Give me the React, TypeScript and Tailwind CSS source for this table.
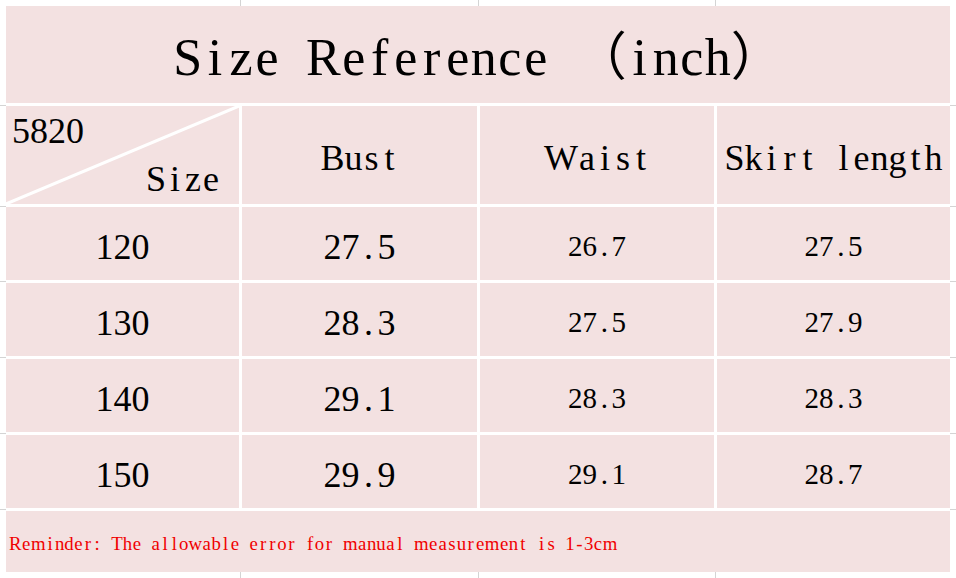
import React from "react";

const Mono = ({ text }: { text: string }) => (
  <>
    {Array.from(text).map((c, i) => (
      <span key={i} className="inline-block min-w-[0.5em] text-center">
        {c === " " ? "\u00a0" : c}
      </span>
    ))}
  </>
);

const rows = [
  ["120", "27.5", "26.7", "27.5"],
  ["130", "28.3", "27.5", "27.9"],
  ["140", "29.1", "28.3", "28.3"],
  ["150", "29.9", "29.1", "28.7"],
];

const font = "font-['Liberation_Serif','Noto_Sans_CJK_SC',serif]";

export default function App() {
  const cell =
    "bg-[#f3e1e1] flex items-center justify-center whitespace-nowrap text-black pt-[6px]";
  return (
    <div className={`relative w-[956px] h-[578px] bg-white p-[6px] ${font}`}>
      <svg
        className="absolute inset-0"
        width="956"
        height="578"
        viewBox="0 0 956 578"
      >
        {[240.5, 478.5, 715.5].map((x) => (
          <line key={x} x1={x} y1={0} x2={x} y2={578} stroke="#d4d4d4" strokeWidth={1} />
        ))}
        {[105.5, 206.5, 281.5, 357.5, 433.5, 509.5].map((y) => (
          <line key={y} x1={0} y1={y} x2={956} y2={y} stroke="#d4d4d4" strokeWidth={1} />
        ))}
      </svg>
      <div className="relative grid w-[944px] h-[566px] bg-white gap-[3px] grid-cols-[233px_235px_234px_233px] grid-rows-[97px_98px_73px_73px_73px_73px_61px]">
        <div className={`${cell} col-span-4 text-[52px] leading-none`}>
          <Mono text="Size Reference （inch）" />
        </div>

        <div className="relative bg-[#f3e1e1] text-[36px] leading-none whitespace-nowrap">
          <svg
            className="absolute inset-0"
            width="233"
            height="98"
            viewBox="0 0 233 98"
            preserveAspectRatio="none"
          >
            <line x1={0} y1={98} x2={233} y2={0} stroke="#ffffff" strokeWidth={3} />
          </svg>
          <div className="relative flex h-full flex-col justify-between pt-[7px] pb-[7px] pl-[6px] pr-[19px]">
            <div className="self-start">
              <Mono text="5820" />
            </div>
            <div className="self-end">
              <Mono text="Size" />
            </div>
          </div>
        </div>
        <div className={`${cell} text-[36px] leading-none`}>
          <Mono text="Bust" />
        </div>
        <div className={`${cell} text-[36px] leading-none`}>
          <Mono text="Waist" />
        </div>
        <div className={`${cell} text-[36px] leading-none`}>
          <Mono text="Skirt length" />
        </div>

        {rows.map((r) => (
          <React.Fragment key={r[0]}>
            <div className={`${cell} text-[36px] leading-none`}>
              <Mono text={r[0]} />
            </div>
            <div className={`${cell} text-[36px] leading-none`}>
              <Mono text={r[1]} />
            </div>
            <div className={`${cell} text-[29px] leading-none`}>
              <Mono text={r[2]} />
            </div>
            <div className={`${cell} text-[29px] leading-none`}>
              <Mono text={r[3]} />
            </div>
          </React.Fragment>
        ))}

        <div className="col-span-4 bg-[#f3e1e1] flex items-center justify-start whitespace-nowrap pl-[3px] pt-[5px] text-[18.8px] leading-none text-[#f00000]">
          <Mono text="Reminder: The allowable error for manual measurement is 1-3cm" />
        </div>
      </div>
    </div>
  );
}
